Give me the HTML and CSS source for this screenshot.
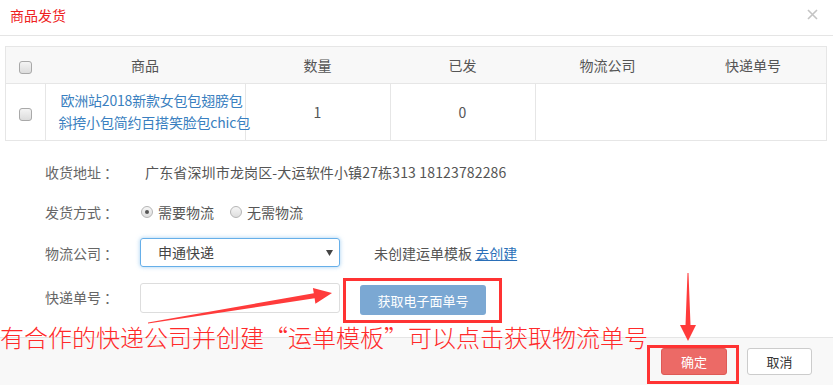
FILE: index.html
```html
<!DOCTYPE html>
<html lang="zh-CN">
<head>
    <meta charset="UTF-8">
    <title>商品发货</title>
    <link rel="stylesheet" href="styles.css">
</head>
<body>

<div class="dialog">
    <div class="dlg-head">
        <span class="dlg-title">商品发货</span>
        <svg class="dlg-close" width="11" height="11" viewBox="0 0 11 11">
            <path d="M1 1 L10 10 M10 1 L1 10" stroke="#c4c4c4" stroke-width="1.6" />
        </svg>
    </div>

    <div class="dlg-body">
        <table class="goods">
            <thead>
                <tr>
                    <th class="col-check"><span class="chk"></span></th>
                    <th class="col-name">商品</th>
                    <th class="col-num">数量</th>
                    <th class="col-num">已发</th>
                    <th class="col-num">物流公司</th>
                    <th>快递单号</th>
                </tr>
            </thead>
            <tbody>
                <tr>
                    <td class="col-check"><span class="chk"></span></td>
                    <td class="col-name"><a class="goods-link">欧洲站2018新款女包包翅膀包<br>斜挎小包简约百搭笑脸包chic包</a></td>
                    <td>1</td>
                    <td>0</td>
                    <td></td>
                    <td class="no-line"></td>
                </tr>
            </tbody>
        </table>

        <div class="form">
            <div class="form-row row-addr">
                <label>收货地址<i>：</i></label>
                <span class="addr">广东省深圳市龙岗区-大运软件小镇27栋313 18123782286</span>
            </div>
            <div class="form-row row-way">
                <label>发货方式<i>：</i></label>
                <span class="radio checked"></span><span class="radio-text">需要物流</span>
                <span class="radio"></span><span class="radio-text">无需物流</span>
            </div>
            <div class="form-row row-company">
                <label>物流公司<i>：</i></label>
                <div class="select">申通快递
                    <svg class="caret" width="7" height="6" viewBox="0 0 7 6"><path d="M0 0 H7 L3.5 6 Z" fill="#444" /></svg>
                </div>
                <span class="tip">未创建运单模板 <a class="link">去创建</a></span>
            </div>
            <div class="form-row row-no">
                <label>快递单号<i>：</i></label>
                <div class="input"></div>
                <button class="btn-get">获取电子面单号</button>
            </div>
        </div>
    </div>

    <div class="dlg-foot">
        <button class="btn btn-ok">确定</button>
        <button class="btn btn-cancel">取消</button>
    </div>

    <!-- annotations drawn over the dialog -->
    <div class="note">有合作的快递公司并创建“运单模板”可以点击获取物流单号</div>
    <svg class="marks" width="833" height="385" viewBox="0 0 833 385">
        <rect x="344.5" y="279.5" width="156" height="42" fill="none" stroke="#ff3333" stroke-width="3" />
        <rect x="648.5" y="346.5" width="89" height="36" fill="none" stroke="#ff3333" stroke-width="3" />
        <polygon fill="#ff3b3b" points="148,322.5 313.8,293.3 312.9,287.9 332,293 315.4,303.7 314.6,298.3 148,323.5" />
        <polygon fill="#ff3b3b" points="687.5,273 685.5,325 680,325 688,341 696,325 690.5,325 688.5,273" />
    </svg>
</div>

</body>
</html>
```

FILE: styles.css
```css
body {
    margin: 0;
    background-color: #fff;
    font-family: "Microsoft YaHei", "Noto Sans CJK SC", sans-serif;
    font-size: 14px;
    color: #555;
}

.dialog {
    position: relative;
    width: 833px;
    height: 385px;
    display: flex;
    flex-direction: column;
    overflow: hidden;
}

.dlg-head {
    height: 35px;
    border-bottom: 1px solid #e5e5e5;
    display: flex;
    align-items: center;
    justify-content: space-between;
    padding: 0 15px 0 10px;
    flex-shrink: 0;
}

.dlg-title {
    color: #ee2222;
    font-size: 14px;
    line-height: 20px;
    margin-top: -6px;
}

.dlg-close {
    margin-top: -6px;
}

.dlg-body {
    flex: 1;
    padding: 10px 6px 0 5px;
}

.goods {
    width: 822px;
    border-collapse: collapse;
    border: 1px solid #e6e6e6;
    table-layout: fixed;
}

.goods th {
    height: 36px;
    background-color: #f8f8f8;
    font-weight: normal;
    color: #555;
    border-bottom: 1px solid #e6e6e6;
    padding: 0;
}

.goods td {
    height: 56px;
    text-align: center;
    border-left: 1px solid #e6e6e6;
    padding: 0;
    color: #555;
}

.goods .col-check {
    width: 39px;
    border-left: none;
}

.goods .col-name {
    width: 200px;
}

.goods .col-num {
    width: 145px;
}

.goods .no-line {
    border-left: none;
}

.goods-link {
    display: block;
    color: #3a7fc0;
    line-height: 22px;
    white-space: nowrap;
    padding-left: 13px;
    margin-top: -2px;
    letter-spacing: -0.2px;
}

.chk {
    display: inline-block;
    width: 11px;
    height: 11px;
    border: 1px solid #a9a9a9;
    border-radius: 3px;
    background: linear-gradient(#f4f4f4, #dcdcdc);
    vertical-align: middle;
}

.form {
    padding-left: 40px;
    padding-top: 11px;
}

.form-row {
    display: flex;
    align-items: center;
}

.form-row label {
    width: 95px;
    color: #666;
    flex-shrink: 0;
}

.form-row label i {
    font-style: normal;
    margin-left: 3px;
}

.row-addr {
    height: 40px;
}

.addr {
    color: #555;
    padding-left: 5px;
    letter-spacing: 0.15px;
}

.row-way {
    height: 40px;
}

.radio {
    width: 10px;
    height: 10px;
    border: 1px solid #b5b5b5;
    border-radius: 50%;
    background: linear-gradient(#f6f6f6, #dedede);
    margin: 0 5px 0 1px;
    position: relative;
}

.radio.checked::after {
    content: "";
    position: absolute;
    left: 3px;
    top: 3px;
    width: 4px;
    height: 4px;
    border-radius: 50%;
    background-color: #555;
}

.radio-text {
    margin-right: 15px;
    color: #555;
}

.row-company {
    margin-top: 6px;
    height: 29px;
}

.select {
    width: 181px;
    height: 27px;
    border: 1px solid #66afe9;
    border-radius: 3px;
    box-shadow: 0 0 4px rgba(102, 175, 233, 0.6);
    padding-left: 17px;
    line-height: 27px;
    color: #444;
    position: relative;
    box-sizing: content-box;
}

.caret {
    position: absolute;
    right: 6px;
    top: 11px;
}

.tip {
    margin-left: 34px;
    color: #555;
}

.link {
    color: #2a6fb8;
    text-decoration: underline;
}

.row-no {
    margin-top: 16px;
    align-items: flex-start;
}

.row-no label {
    margin-top: 4px;
}

.input {
    width: 198px;
    height: 28px;
    border: 1px solid #ddd;
    border-radius: 3px;
}

.btn-get {
    margin: 2px 0 0 20px;
    width: 126px;
    height: 30px;
    border: none;
    border-radius: 3px;
    background-color: #7ba8d3;
    color: #fff;
    font-family: inherit;
    font-size: 13px;
}

.dlg-foot {
    height: 48px;
    border-top: 1px solid #e5e5e5;
    background-color: #f8f8f8;
    display: flex;
    justify-content: flex-end;
    align-items: flex-start;
    padding: 10px 21px 0 0;
    gap: 20px;
    box-sizing: border-box;
    flex-shrink: 0;
}

.btn {
    height: 27px;
    border-radius: 3px;
    font-family: inherit;
    font-size: 13px;
    padding: 0;
}

.btn-ok {
    width: 66px;
    background-color: #ec6a66;
    border: 1px solid #de5a56;
    color: #fff;
}

.btn-cancel {
    width: 65px;
    background-color: #fff;
    border: 1px solid #ccc;
    color: #333;
}

.note {
    position: absolute;
    left: 0;
    top: 322px;
    font-size: 24px;
    line-height: 30px;
    color: #ff2a2a;
    white-space: nowrap;
    font-weight: 300;
}

.marks {
    position: absolute;
    left: 0;
    top: 0;
    pointer-events: none;
}
```
